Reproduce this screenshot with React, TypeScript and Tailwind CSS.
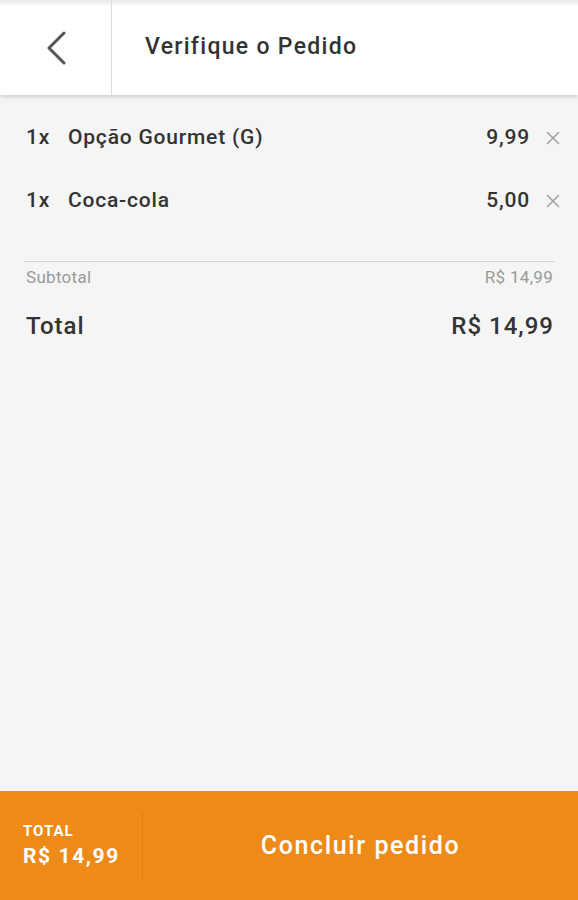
import React from 'react';

const items = [
  { qty: 1, name: 'Opção Gourmet (G)', price: '9,99' },
  { qty: 1, name: 'Coca-cola', price: '5,00' },
];

function ChevronLeft() {
  return (
    <svg width="22" height="36" viewBox="0 0 22 36" fill="none">
      <path d="M19 2 L4 17 L19 32" stroke="#555" strokeWidth="3" strokeLinecap="round" strokeLinejoin="round" />
    </svg>
  );
}

function CloseX() {
  return (
    <svg width="14" height="14" viewBox="0 0 14 14" fill="none">
      <path d="M1.5 1.5 L12.5 12.5 M12.5 1.5 L1.5 12.5" stroke="#a0a0a0" strokeWidth="1.5" strokeLinecap="round" />
    </svg>
  );
}

export default function App() {
  return (
    <div className="w-[578px] h-[900px] flex flex-col bg-[#f5f5f5] text-[#333] overflow-hidden" style={{ fontFamily: 'Roboto, "Noto Sans", sans-serif' }}>
      {/* Header */}
      <header className="relative z-10 h-[95px] flex bg-[linear-gradient(to_bottom,#e9e9e9,#ffffff_7px)] shadow-[0_2px_4px_rgba(0,0,0,0.16)]">
        <button className="w-[112px] flex items-center justify-center border-r border-[#dcdcdc] pt-[3px]">
          <ChevronLeft />
        </button>
        <div className="flex items-center pl-[33px]">
          <h1 className="text-[23px] font-medium tracking-[1.3px]">Verifique o Pedido</h1>
        </div>
      </header>

      {/* Items */}
      <main className="flex-1 pt-[11px]">
        <div className="pl-[26px] pr-[18px]">
          {items.map((item) => (
            <div key={item.name} className="h-[63px] flex items-center text-[21px] font-medium tracking-[0.8px]">
              <span className="w-[42px]">{item.qty}x</span>
              <span className="flex-1">{item.name}</span>
              <span>{item.price}</span>
              <span className="w-[30px] flex justify-end"><CloseX /></span>
            </div>
          ))}
        </div>

        <div className="pl-[24px] pr-[23px] pt-[29px]">
          <div className="h-px bg-[#d4d4d4]" />
          <div className="flex justify-between items-center h-[32px] pl-[2px] pr-[2px] text-[17px] text-[#9a9a9a] tracking-[0.3px]">
            <span>Subtotal</span>
            <span>R$ 14,99</span>
          </div>
          <div className="flex justify-between items-center h-[64px] pl-[2px] pr-[1px] text-[24px] font-medium tracking-[1px]">
            <span>Total</span>
            <span>R$ 14,99</span>
          </div>
        </div>
      </main>

      {/* Bottom bar */}
      <footer className="h-[109px] flex items-center bg-[#ee8a17] text-white">
        <div className="w-[143px] h-[68px] flex flex-col justify-center pl-[23px] border-r border-[#de7f12] leading-none">
          <span className="text-[15px] font-bold tracking-[1px]">TOTAL</span>
          <span className="text-[21px] font-bold tracking-[1.6px] mt-[7px]">R$ 14,99</span>
        </div>
        <button className="flex-1 h-full flex items-center justify-center text-[25px] font-medium tracking-[1.6px]">
          Concluir pedido
        </button>
      </footer>
    </div>
  );
}
